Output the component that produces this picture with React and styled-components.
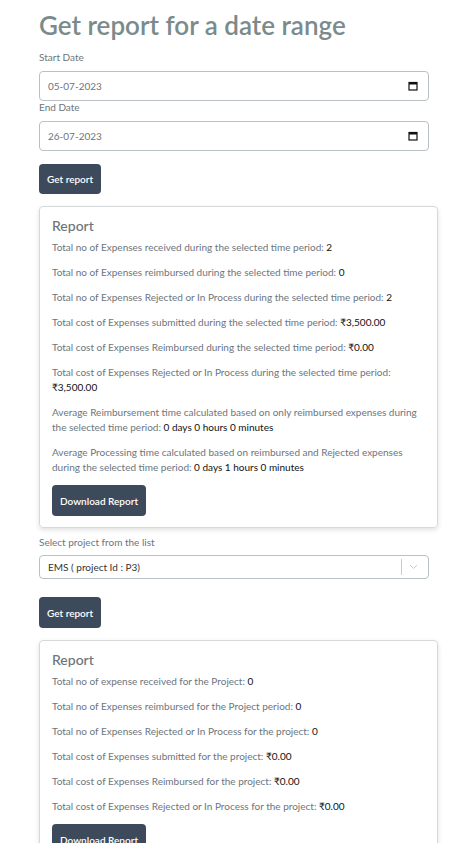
import React from 'react'
import styled, { createGlobalStyle } from 'styled-components'

const Global = createGlobalStyle`
body {
margin: 0;
background: #fff;
font-family: Lato, "Open Sans", sans-serif;
}
`
const Page = styled.div`
padding: 8px 35px 20px 39px;
display: flex;
flex-direction: column;
`
const Title = styled.h1`
margin: 0 0 9px 0;
font-size: 26px;
font-weight: 600;
color: #7b8b8b;
line-height: 34px;
`
const Label = styled.label`
font-size: 10px;
color: #6c757d;
line-height: 13px;
margin-bottom: ${(p) => p.gap || '7px'};
display: block;
`
const Field = styled.div`
width: 390px;
box-sizing: border-box;
height: ${(p) => p.h || '30px'};
border: 1px solid #b9c0c4;
border-radius: 4px;
display: flex;
align-items: center;
justify-content: space-between;
padding: 0 10px 0 8px;
font-size: 10px;
color: ${(p) => p.dark ? '#333' : '#6c757d'};
margin-bottom: ${(p) => p.mb || '0'};
`
const Btn = styled.button`
align-self: flex-start;
background: #3d4a5c;
color: #fff;
border: none;
border-radius: 4px;
font-family: inherit;
font-size: 10px;
font-weight: 600;
padding: 0 8px;
height: ${(p) => p.h || '30px'};
margin: ${(p) => p.m || '0'};
`
const Card = styled.div`
width: 399px;
box-sizing: border-box;
border: 1px solid #d6d9dc;
border-radius: 4px;
box-shadow: 0 2px 5px rgba(0,0,0,0.12);
padding: 10px 12px 11px 12px;
display: flex;
flex-direction: column;
margin-bottom: ${(p) => p.mb || '0'};
`
const CardTitle = styled.h2`
margin: 0 0 5px 0;
font-size: 14px;
font-weight: 500;
color: #6c757d;
line-height: 18px;
`
const Line = styled.p`
margin: 0 0 10px 0;
font-size: 10px;
line-height: 15px;
color: #6c757d;
span { color: #111; }
`
const Sep = styled.div`
display: flex;
align-items: center;
gap: 7px;
i {
width: 1px;
height: 16px;
background: #ccc;
}
`

const Calendar = () => (
  <svg width="10" height="10" viewBox="0 0 10 10">
    <rect x="1" y="1.5" width="8" height="7.5" fill="none" stroke="#111" strokeWidth="1.2" />
    <rect x="1" y="1.5" width="8" height="2" fill="#111" />
  </svg>
)

const dateLines = [
  ['Total no of Expenses received during the selected time period: ', '2'],
  ['Total no of Expenses reimbursed during the selected time period: ', '0'],
  ['Total no of Expenses Rejected or In Process during the selected time period: ', '2'],
  ['Total cost of Expenses submitted during the selected time period: ', '₹3,500.00'],
  ['Total cost of Expenses Reimbursed during the selected time period: ', '₹0.00'],
  ['Total cost of Expenses Rejected or In Process during the selected time period: ', '₹3,500.00'],
  ['Average Reimbursement time calculated based on only reimbursed expenses during the selected time period: ', '0 days 0 hours 0 minutes'],
  ['Average Processing time calculated based on reimbursed and Rejected expenses during the selected time period: ', '0 days 1 hours 0 minutes'],
]
const projectLines = [
  ['Total no of expense received for the Project: ', '0'],
  ['Total no of Expenses reimbursed for the Project period: ', '0'],
  ['Total no of Expenses Rejected or In Process for the project: ', '0'],
  ['Total cost of Expenses submitted for the project: ', '₹0.00'],
  ['Total cost of Expenses Reimbursed for the project: ', '₹0.00'],
  ['Total cost of Expenses Rejected or In Process for the project: ', '₹0.00'],
]

export default function App() {
  return (
    <Page>
      <Global />
      <Title>Get report for a date range</Title>
      <Label>Start Date</Label>
      <Field>05-07-2023<Calendar /></Field>
      <Label>End Date</Label>
      <Field mb="13px">26-07-2023<Calendar /></Field>
      <Btn m="0 0 12px 0">Get report</Btn>
      <Card mb="8px">
        <CardTitle>Report</CardTitle>
        {dateLines.map(([t, v]) => (
          <Line key={t}>{t}<span>{v}</span></Line>
        ))}
        <Btn h="31px">Download Report</Btn>
      </Card>
      <Label gap="6px">Select project from the list</Label>
      <Field h="24px" mb="18px" dark>
        EMS ( project Id : P3)
        <Sep><i /><svg width="9" height="6" viewBox="0 0 9 6"><path d="M1 1l3.5 3.5L8 1" fill="none" stroke="#ccc" strokeWidth="1" /></svg></Sep>
      </Field>
      <Btn h="31px" m="0 0 12px 0">Get report</Btn>
      <Card>
        <CardTitle>Report</CardTitle>
        {projectLines.map(([t, v]) => (
          <Line key={t}>{t}<span>{v}</span></Line>
        ))}
        <Btn h="31px">Download Report</Btn>
      </Card>
    </Page>
  )
}
